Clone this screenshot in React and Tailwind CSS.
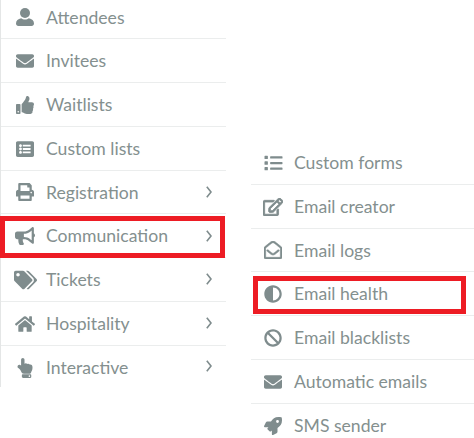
import React from 'react'
import {
  FaEnvelope, FaThumbsUp, FaListAlt, FaPrint, FaBullhorn, FaTags, FaHome, FaHandPointUp,
  FaList, FaRegEdit, FaRegEnvelopeOpen, FaAdjust, FaBan, FaRocket,
} from 'react-icons/fa'

function UserIcon({ className }) {
  return (
    <svg viewBox="0 0 18 18" fill="currentColor" className={className}>
      <circle cx="9" cy="5" r="5" />
      <path d="M0 15.5c0-3 2-4.6 5.2-5.2 1 .9 2.3 1.3 3.8 1.3s2.800-.4 3.800-1.300c3.200.6 5.200 2.200 5.200 5.200 0 1.500-1 2.500-2.400 2.500H2.400C1 18 0 17 0 15.500z" />
    </svg>
  )
}

const mainItems = [
  { label: 'Attendees', icon: UserIcon, size: 'h-[18px] w-[18px]' },
  { label: 'Invitees', icon: FaEnvelope, size: 'h-[18px] w-[18px]' },
  { label: 'Waitlists', icon: FaThumbsUp, size: 'h-[18px] w-[18px]' },
  { label: 'Custom lists', icon: FaListAlt, size: 'h-[18px] w-[18px]' },
  { label: 'Registration', icon: FaPrint, size: 'h-[18px] w-[18px]', more: true },
  { label: 'Communication', icon: FaBullhorn, size: 'h-[20px] w-[20px]', more: true, box: '-left-px right-px top-[2px] -bottom-px' },
  { label: 'Tickets', icon: FaTags, size: 'h-[20px] w-[23px]', more: true },
  { label: 'Hospitality', icon: FaHome, size: 'h-[18px] w-[20px]', more: true },
  { label: 'Interactive', icon: FaHandPointUp, size: 'h-[20px] w-[16px]', more: true },
]

const subItems = [
  { label: 'Custom forms', icon: FaList, size: 'h-[18px] w-[19px]' },
  { label: 'Email creator', icon: FaRegEdit, size: 'h-[18px] w-[20px] stroke-[24px]' },
  { label: 'Email logs', icon: FaRegEnvelopeOpen, size: 'h-[18px] w-[18px] stroke-[16px]' },
  { label: 'Email health', icon: FaAdjust, size: 'h-[18px] w-[18px]', box: 'left-[2px] right-[8px] top-[4px] bottom-px' },
  { label: 'Email blacklists', icon: FaBan, size: 'h-[18px] w-[18px]' },
  { label: 'Automatic emails', icon: FaEnvelope, size: 'h-[18px] w-[18px]' },
  { label: 'SMS sender', icon: FaRocket, size: 'h-[18px] w-[18px]' },
]

function Row({ item, slot }) {
  const Icon = item.icon
  return (
    <div className="relative flex h-[43.75px] items-center border-b border-[#ebeded] pt-px text-[#7f8c8d] last:h-[41px] last:border-b-0 last:pt-[3.7px]">
      <span className={`flex w-[24px] justify-center ${slot}`}>
        <Icon className={item.size} />
      </span>
      <span className="ml-[9px] text-[17.6px] leading-none text-[#84908f]">{item.label}</span>
      {item.more && (
        <svg viewBox="0 0 6 12" fill="none" stroke="currentColor" strokeWidth="1.6" className="absolute left-[205px] top-1/2 h-[12px] w-[6px] -translate-y-1/2">
          <path d="M.8.8 5 6 .8 11.200" />
        </svg>
      )}
      {item.box && <div className={`absolute border-[5px] border-[#ed1c24] ${item.box}`} />}
    </div>
  )
}

export default function App() {
  return (
    <div className="flex h-[438px] w-[474px] items-start overflow-hidden bg-white font-['Lato',sans-serif]">
      <div className="-mt-[4.4px] w-[226px] border-l border-[#e4e6e6]">
        {mainItems.map((item) => (
          <Row key={item.label} item={item} slot="ml-[12px]" />
        ))}
      </div>
      <div className="ml-[25px] mt-[141px] w-[223px]">
        {subItems.map((item) => (
          <Row key={item.label} item={item} slot="ml-[10px]" />
        ))}
      </div>
    </div>
  )
}
